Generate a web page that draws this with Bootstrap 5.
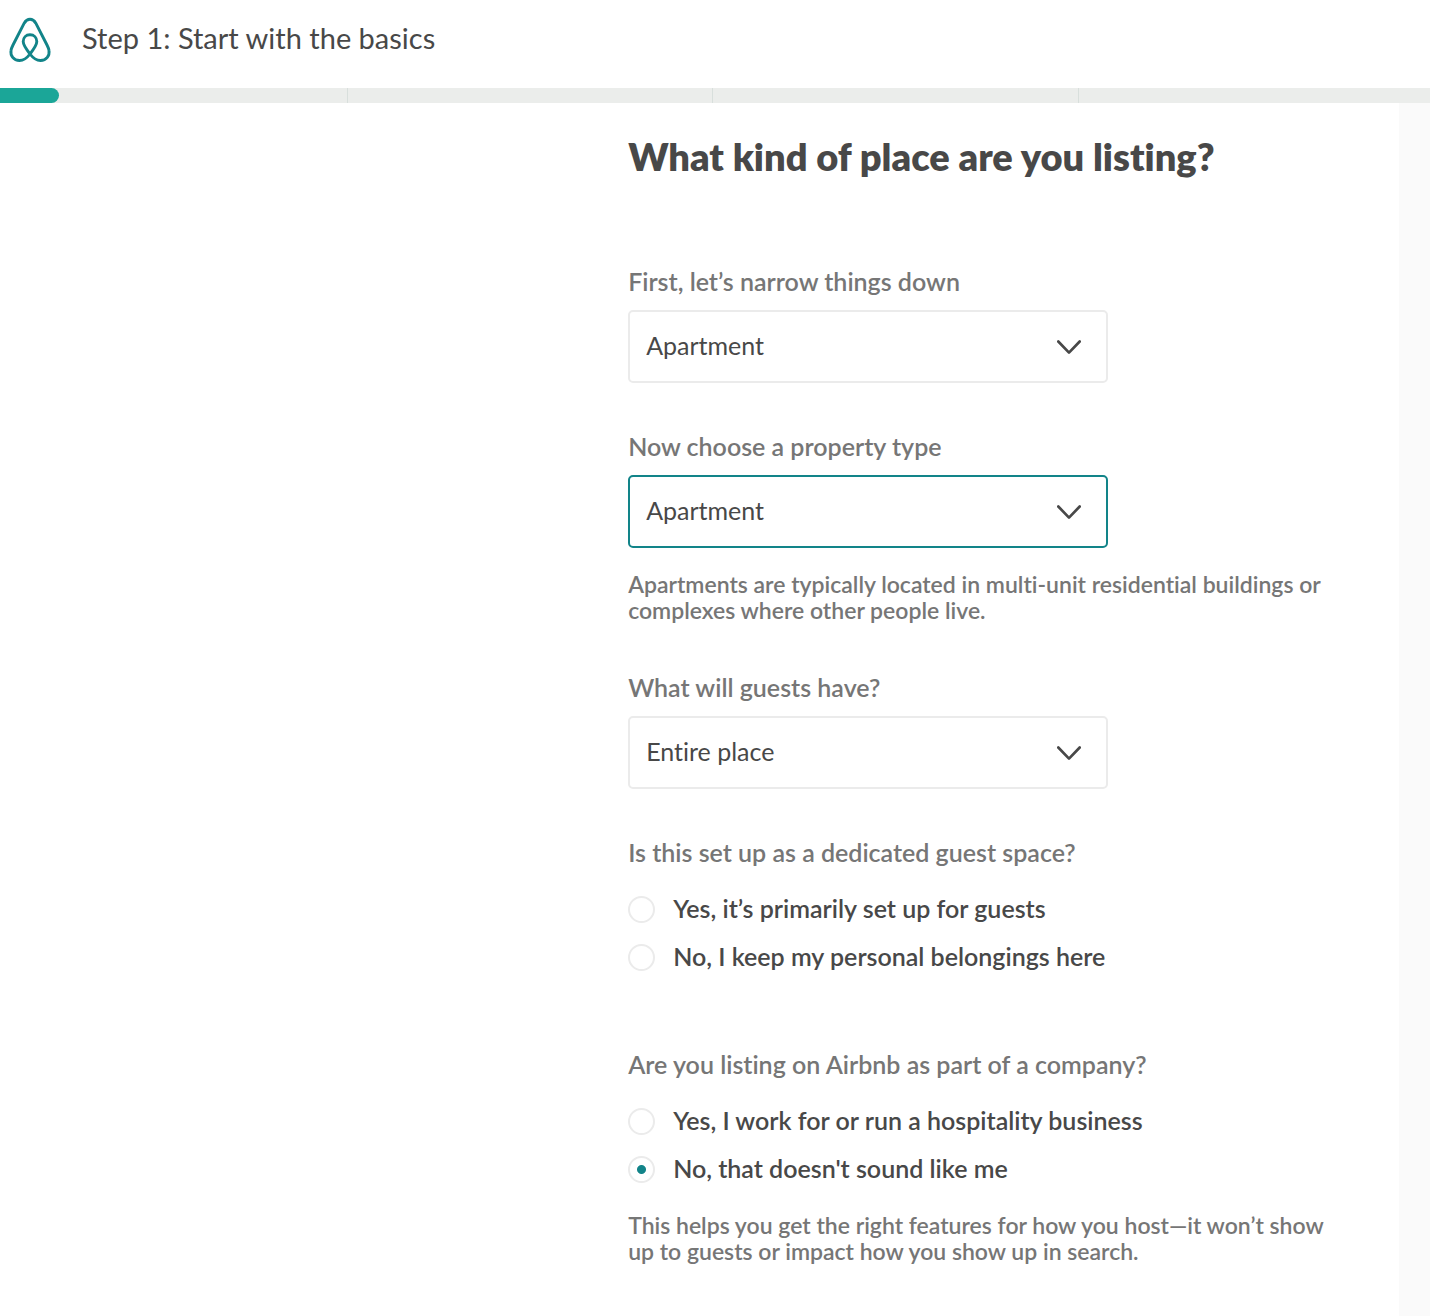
<!DOCTYPE html>
<html lang="en">
<head>
<meta charset="utf-8">
<meta name="viewport" content="width=device-width, initial-scale=1">
<title>Step 1: Start with the basics</title>
<link href="https://cdn.jsdelivr.net/npm/bootstrap@5.3.0/dist/css/bootstrap.min.css" rel="stylesheet">
<style>
  :root { --ink: #484848; --soft: #767676; --line: #ebebeb; --teal: #128489; }
  body { font-family: Lato, "Liberation Sans", sans-serif; font-variant-ligatures: none; font-size: 25px; line-height: 32px; color: var(--ink); background: #fff; }
  .site-header { height: 88px; padding: 0 8px 8px; gap: 30px; }
  .step-title { font-size: 29px; line-height: 40px; font-weight: 400; padding-bottom: 4px; }
  .step-track { height: 15px; background: #ebedeb; }
  .step-part { flex: 0 0 25.56%; border-right: 1px solid #d8dfdc; }
  .step-part:first-child { flex-basis: 24.32%; }
  .step-part:last-child { flex: 1; border: 0; }
  .step-done { width: 17%; height: 100%; background: #1ba698; border-radius: 0 8px 8px 0; }
  .page-body { min-height: calc(100vh - 103px); }
  .left-space { flex: 0 0 44.9%; }
  .side-strip { flex: 0 0 31px; background: #fafafa; }
  .form-area { max-width: 720px; padding: 29px 0 48px; }
  .page-heading { font-size: 38px; line-height: 48px; font-weight: 800; margin-bottom: 85px; }
  .field-label { display: block; float: none; font-size: 25px; line-height: 32px; font-weight: 600; color: var(--soft); margin-bottom: 13px; width: auto; }
  .field { margin-bottom: 47px; }
  .place-select { width: 480px; max-width: 100%; height: 73px; padding: 0 60px 4px 16px; border: 2px solid var(--line); border-radius: 5px; font-size: 25px; line-height: 32px; font-variant-ligatures: none; color: var(--ink);
    background-image: url("data:image/svg+xml,%3Csvg xmlns='http://www.w3.org/2000/svg' viewBox='0 0 24 15'%3E%3Cpath d='M1.3 1.5 12 12.6 22.7 1.5' fill='none' stroke='%23484848' stroke-width='2.7' stroke-linecap='round' stroke-linejoin='round'/%3E%3C/svg%3E");
    background-size: 24px 15px; background-position: right 25px top 28px; }
  .place-select.is-current { border-color: var(--teal); }
  .help-text { font-size: 23px; line-height: 26px; font-weight: 600; color: var(--soft); margin: 23px 0 0; padding-bottom: 1px; }
  .choice-group { margin-bottom: 67px; }
  .choice-group .field-label { margin-bottom: 17px; }
  .choice { display: flex; align-items: center; height: 48px; gap: 18px; }
  .choice .form-check-input { flex: none; width: 27px; height: 27px; margin: 0; border: 2px solid var(--line); background-color: #fff; }
  .choice .form-check-input:checked { background-image: radial-gradient(circle, var(--teal) 4px, transparent 5px); }
  .choice label { font-weight: 600; padding-bottom: 2px; }
  .choice-help { margin-top: 19px; }
</style>
<script src="https://cdn.jsdelivr.net/npm/bootstrap@5.3.0/dist/js/bootstrap.bundle.min.js"></script>
</head>
<body>
<header class="site-header d-flex align-items-center">
  <a href="#" class="d-block lh-1" aria-label="Airbnb home">
    <svg class="d-block" width="44" height="48" viewBox="0 0 44 48" fill="none" stroke="#128489" stroke-width="2.900" stroke-linejoin="round">
      <path d="M22 38C19 42 15.500 44.500 11.500 44.500C5.500 44.500 2.200 39.500 3 34.500C3.200 33 4 31 5 29L16.200 7.200C19.200 2 24.800 2 27.800 7.200L39 29C40 31 40.800 33 41 34.500C41.800 39.500 38.500 44.500 32.500 44.500C28.500 44.500 25 42 22 38C18 33 15.200 29.500 15.200 25.600C15.200 21.500 18 18.800 22 18.800C26 18.800 28.800 21.500 28.800 25.600C28.800 29.500 26 33 22 38Z"/>
    </svg>
  </a>
  <h1 class="step-title mb-0">Step 1: Start with the basics</h1>
</header>
<div class="step-track d-flex overflow-hidden" role="progressbar" aria-label="Listing progress" aria-valuenow="4" aria-valuemin="0" aria-valuemax="100">
  <div class="step-part"><div class="step-done"></div></div>
  <div class="step-part"></div>
  <div class="step-part"></div>
  <div class="step-part"></div>
</div>
<div class="page-body d-flex">
  <main class="d-flex flex-grow-1">
    <div class="left-space"></div>
    <form class="form-area flex-grow-1">
      <h2 class="page-heading">What kind of place are you listing?</h2>
      <div class="field">
        <label class="field-label" for="kind">First, let’s narrow things down</label>
        <select class="form-select place-select" id="kind"><option>Apartment</option></select>
      </div>
      <div class="field">
        <label class="field-label" for="property">Now choose a property type</label>
        <select class="form-select place-select is-current" id="property"><option>Apartment</option></select>
        <p class="help-text">Apartments are typically located in multi-unit residential buildings or complexes where other people live.</p>
      </div>
      <div class="field">
        <label class="field-label" for="guests">What will guests have?</label>
        <select class="form-select place-select" id="guests"><option>Entire place</option></select>
      </div>
      <fieldset class="choice-group">
        <legend class="field-label">Is this set up as a dedicated guest space?</legend>
        <div class="choice"><input class="form-check-input" type="radio" name="space" id="spaceYes"><label for="spaceYes">Yes, it’s primarily set up for guests</label></div>
        <div class="choice"><input class="form-check-input" type="radio" name="space" id="spaceNo"><label for="spaceNo">No, I keep my personal belongings here</label></div>
      </fieldset>
      <fieldset class="choice-group mb-0">
        <legend class="field-label">Are you listing on Airbnb as part of a company?</legend>
        <div class="choice"><input class="form-check-input" type="radio" name="company" id="companyYes"><label for="companyYes">Yes, I work for or run a hospitality business</label></div>
        <div class="choice"><input class="form-check-input" type="radio" name="company" id="companyNo" checked><label for="companyNo">No, that doesn't sound like me</label></div>
        <p class="help-text choice-help">This helps you get the right features for how you host—it won’t show up to guests or impact how you show up in search.</p>
      </fieldset>
    </form>
  </main>
  <aside class="side-strip"></aside>
</div>
</body>
</html>
